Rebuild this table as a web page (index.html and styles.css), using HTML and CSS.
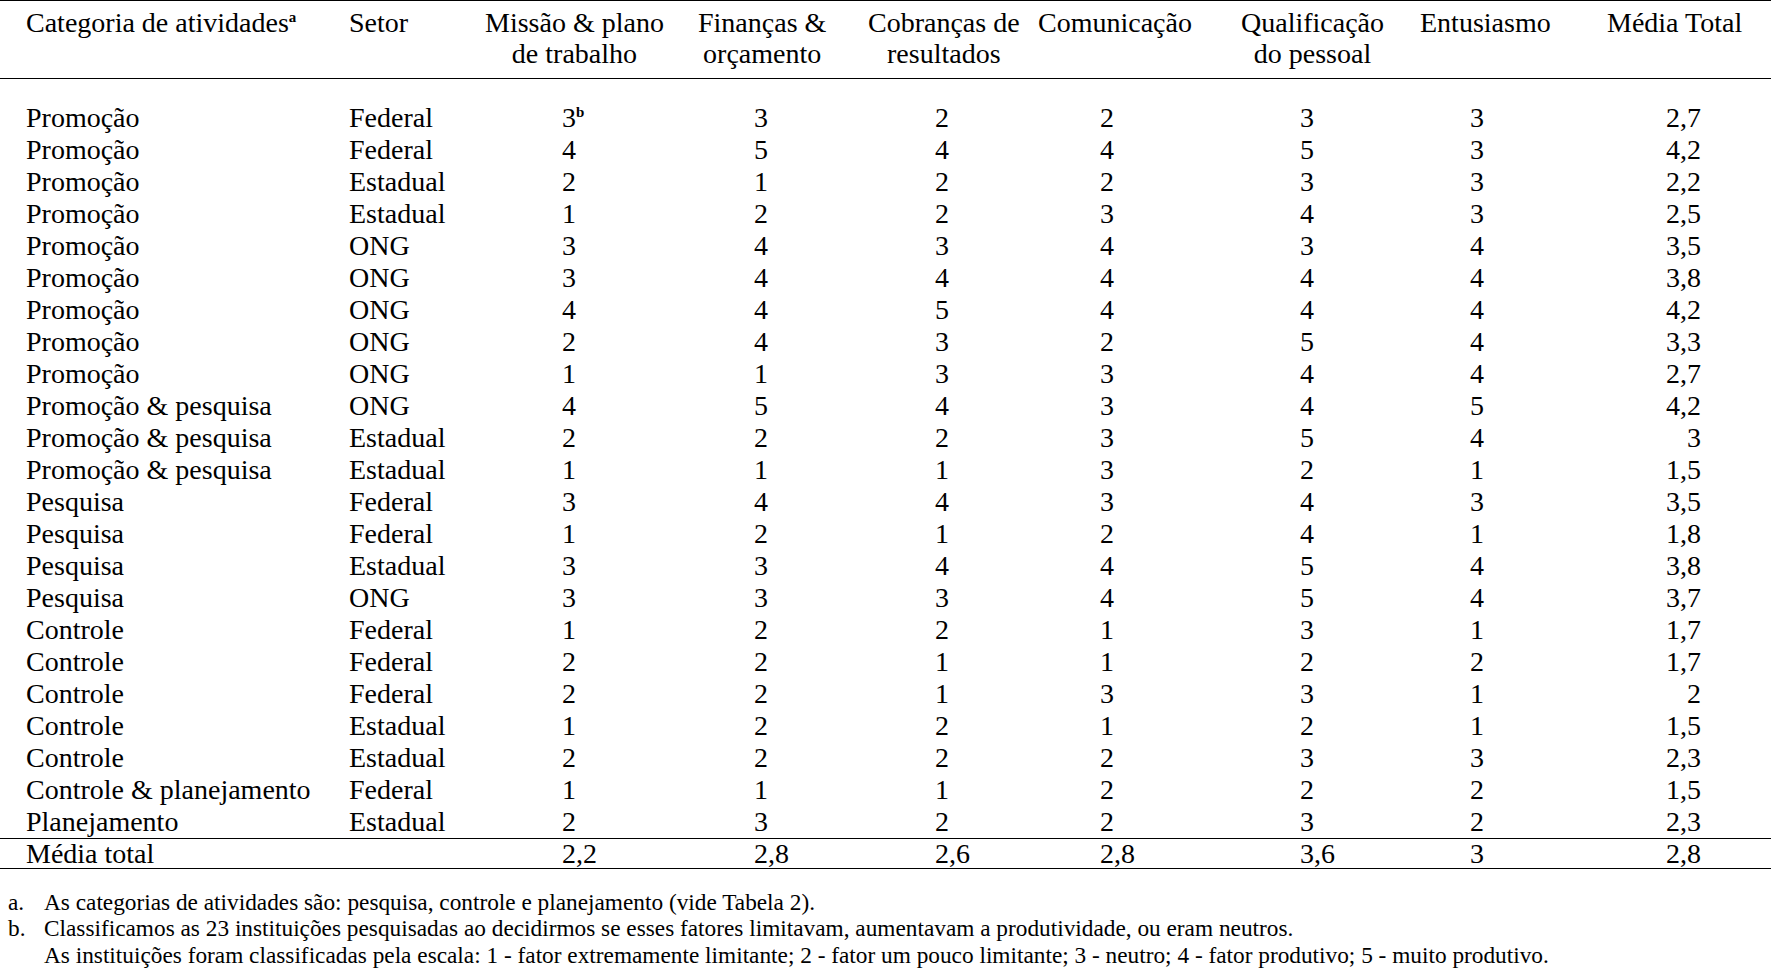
FILE: index.html
```html
<!DOCTYPE html>
<html lang="pt">
<head>
<meta charset="utf-8">
<title>Tabela</title>
<link rel="stylesheet" href="styles.css">
</head>
<body>
<table class="tbl">
  <colgroup>
    <col class="w1"><col class="w2"><col class="w3"><col class="w4"><col class="w5"><col class="w6"><col class="w7"><col class="w8"><col class="w9">
  </colgroup>
  <thead>
    <tr class="head">
      <th>Categoria de atividades<sup class="fn">a</sup></th>
      <th>Setor</th>
      <th><span class="hd">Missão &amp; plano<br>de trabalho</span></th>
      <th><span class="hd">Finanças &amp;<br>orçamento</span></th>
      <th><span class="hd">Cobranças de<br>resultados</span></th>
      <th><span class="hd">Comunicação</span></th>
      <th><span class="hd">Qualificação<br>do pessoal</span></th>
      <th><span class="hd">Entusiasmo</span></th>
      <th><span class="hd">Média Total</span></th>
    </tr>
  </thead>
  <tbody>
    <tr class="first"><td>Promoção</td><td>Federal</td><td>3<sup class="fn">b</sup></td><td>3</td><td>2</td><td>2</td><td>3</td><td>3</td><td>2,7</td></tr>
    <tr><td>Promoção</td><td>Federal</td><td>4</td><td>5</td><td>4</td><td>4</td><td>5</td><td>3</td><td>4,2</td></tr>
    <tr><td>Promoção</td><td>Estadual</td><td>2</td><td>1</td><td>2</td><td>2</td><td>3</td><td>3</td><td>2,2</td></tr>
    <tr><td>Promoção</td><td>Estadual</td><td>1</td><td>2</td><td>2</td><td>3</td><td>4</td><td>3</td><td>2,5</td></tr>
    <tr><td>Promoção</td><td>ONG</td><td>3</td><td>4</td><td>3</td><td>4</td><td>3</td><td>4</td><td>3,5</td></tr>
    <tr><td>Promoção</td><td>ONG</td><td>3</td><td>4</td><td>4</td><td>4</td><td>4</td><td>4</td><td>3,8</td></tr>
    <tr><td>Promoção</td><td>ONG</td><td>4</td><td>4</td><td>5</td><td>4</td><td>4</td><td>4</td><td>4,2</td></tr>
    <tr><td>Promoção</td><td>ONG</td><td>2</td><td>4</td><td>3</td><td>2</td><td>5</td><td>4</td><td>3,3</td></tr>
    <tr><td>Promoção</td><td>ONG</td><td>1</td><td>1</td><td>3</td><td>3</td><td>4</td><td>4</td><td>2,7</td></tr>
    <tr><td>Promoção &amp; pesquisa</td><td>ONG</td><td>4</td><td>5</td><td>4</td><td>3</td><td>4</td><td>5</td><td>4,2</td></tr>
    <tr><td>Promoção &amp; pesquisa</td><td>Estadual</td><td>2</td><td>2</td><td>2</td><td>3</td><td>5</td><td>4</td><td>3</td></tr>
    <tr><td>Promoção &amp; pesquisa</td><td>Estadual</td><td>1</td><td>1</td><td>1</td><td>3</td><td>2</td><td>1</td><td>1,5</td></tr>
    <tr><td>Pesquisa</td><td>Federal</td><td>3</td><td>4</td><td>4</td><td>3</td><td>4</td><td>3</td><td>3,5</td></tr>
    <tr><td>Pesquisa</td><td>Federal</td><td>1</td><td>2</td><td>1</td><td>2</td><td>4</td><td>1</td><td>1,8</td></tr>
    <tr><td>Pesquisa</td><td>Estadual</td><td>3</td><td>3</td><td>4</td><td>4</td><td>5</td><td>4</td><td>3,8</td></tr>
    <tr><td>Pesquisa</td><td>ONG</td><td>3</td><td>3</td><td>3</td><td>4</td><td>5</td><td>4</td><td>3,7</td></tr>
    <tr><td>Controle</td><td>Federal</td><td>1</td><td>2</td><td>2</td><td>1</td><td>3</td><td>1</td><td>1,7</td></tr>
    <tr><td>Controle</td><td>Federal</td><td>2</td><td>2</td><td>1</td><td>1</td><td>2</td><td>2</td><td>1,7</td></tr>
    <tr><td>Controle</td><td>Federal</td><td>2</td><td>2</td><td>1</td><td>3</td><td>3</td><td>1</td><td>2</td></tr>
    <tr><td>Controle</td><td>Estadual</td><td>1</td><td>2</td><td>2</td><td>1</td><td>2</td><td>1</td><td>1,5</td></tr>
    <tr><td>Controle</td><td>Estadual</td><td>2</td><td>2</td><td>2</td><td>2</td><td>3</td><td>3</td><td>2,3</td></tr>
    <tr><td>Controle &amp; planejamento</td><td>Federal</td><td>1</td><td>1</td><td>1</td><td>2</td><td>2</td><td>2</td><td>1,5</td></tr>
    <tr><td>Planejamento</td><td>Estadual</td><td>2</td><td>3</td><td>2</td><td>2</td><td>3</td><td>2</td><td>2,3</td></tr>
  </tbody>
  <tfoot>
    <tr class="total"><td>Média total</td><td></td><td>2,2</td><td>2,8</td><td>2,6</td><td>2,8</td><td>3,6</td><td>3</td><td>2,8</td></tr>
  </tfoot>
</table>
<div class="notes">
  <div class="note"><span class="lbl">a.</span><div class="txt"><p>As categorias de atividades são: pesquisa, controle e planejamento (vide Tabela 2).</p></div></div>
  <div class="note"><span class="lbl">b.</span><div class="txt"><p>Classificamos as 23 instituições pesquisadas ao decidirmos se esses fatores limitavam, aumentavam a produtividade, ou eram neutros.</p><p>As instituições foram classificadas pela escala: 1 - fator extremamente limitante; 2 - fator um pouco limitante; 3 - neutro; 4 - fator produtivo; 5 - muito produtivo.</p></div></div>
</div>
</body>
</html>
```
FILE: styles.css
```css
html, body {
  margin: 0;
  padding: 0;
  background: #ffffff;
  color: #000000;
  font-family: "Liberation Serif", "Times New Roman", serif;
}

.tbl {
  width: 1771px;
  border-collapse: collapse;
  table-layout: fixed;
  font-size: 28px;
}

.w1 { width: 349px; }
.w2 { width: 132px; }
.w3 { width: 199px; }
.w4 { width: 180px; }
.w5 { width: 175px; }
.w6 { width: 201px; }
.w7 { width: 179px; }
.w8 { width: 185px; }
.w9 { width: 171px; }

.tbl th,
.tbl td {
  padding: 0;
  text-align: left;
  white-space: nowrap;
}

.head {
  border-top: 1.5px solid #000;
  border-bottom: 1.5px solid #000;
}

.head th {
  font-weight: normal;
  vertical-align: top;
  line-height: 31px;
  padding-top: 6px;
  padding-bottom: 9px;
}

.hd {
  display: inline-block;
  text-align: center;
}

.tbl td {
  line-height: 32px;
  height: 32px;
}

.first td {
  padding-top: 23px;
}

.tbl th:nth-child(1),
.tbl td:nth-child(1) { padding-left: 26px; }

.tbl th:nth-child(3) { padding-left: 4px; }
.tbl th:nth-child(4) { padding-left: 18px; }
.tbl th:nth-child(5) { padding-left: 8px; }
.tbl th:nth-child(6) { padding-left: 3px; }
.tbl th:nth-child(7) { padding-left: 5px; }
.tbl th:nth-child(8) { padding-left: 5px; }
.tbl th:nth-child(9) { padding-left: 7px; }

.tbl td:nth-child(3) { padding-left: 81px; }
.tbl td:nth-child(4) { padding-left: 74px; }
.tbl td:nth-child(5) { padding-left: 75px; }
.tbl td:nth-child(6) { padding-left: 65px; }
.tbl td:nth-child(7) { padding-left: 64px; }
.tbl td:nth-child(8) { padding-left: 55px; }
.tbl td:nth-child(9) { text-align: right; padding-right: 70px; }

.total {
  border-top: 1.5px solid #000;
  border-bottom: 1.5px solid #000;
}

.total td {
  line-height: 29px;
  height: 29px;
}

.fn {
  font-size: 15px;
  font-weight: bold;
  line-height: 0;
  vertical-align: 10px;
}

.notes {
  margin-top: 20px;
  font-size: 23.3px;
  line-height: 26.3px;
}

.note {
  display: grid;
  grid-template-columns: 36px 1fr;
  padding-left: 8px;
}

.txt p {
  margin: 0;
}
```
